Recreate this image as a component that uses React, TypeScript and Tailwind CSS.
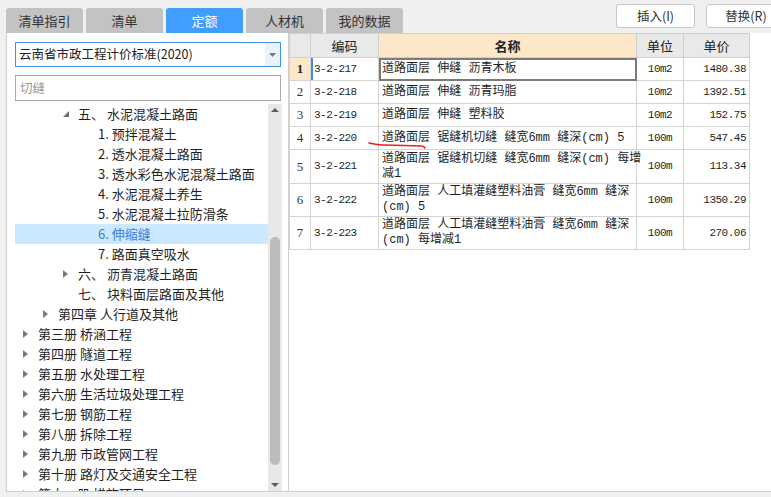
import React from "react";
import clsx from "clsx";

const tabs = ["清单指引", "清单", "定额", "人材机", "我的数据"];

type Node = { level: number; text: string; arrow?: "open" | "closed"; selected?: boolean };

const tree: Node[] = [
  { level: 2, text: "五、 水泥混凝土路面", arrow: "open" },
  { level: 3, text: "1. 预拌混凝土" },
  { level: 3, text: "2. 透水混凝土路面" },
  { level: 3, text: "3. 透水彩色水泥混凝土路面" },
  { level: 3, text: "4. 水泥混凝土养生" },
  { level: 3, text: "5. 水泥混凝土拉防滑条" },
  { level: 3, text: "6. 伸缩缝", selected: true },
  { level: 3, text: "7. 路面真空吸水" },
  { level: 2, text: "六、 沥青混凝土路面", arrow: "closed" },
  { level: 2, text: "七、 块料面层路面及其他" },
  { level: 1, text: "第四章 人行道及其他", arrow: "closed" },
  { level: 0, text: "第三册 桥涵工程", arrow: "closed" },
  { level: 0, text: "第四册 隧道工程", arrow: "closed" },
  { level: 0, text: "第五册 水处理工程", arrow: "closed" },
  { level: 0, text: "第六册 生活垃圾处理工程", arrow: "closed" },
  { level: 0, text: "第七册 钢筋工程", arrow: "closed" },
  { level: 0, text: "第八册 拆除工程", arrow: "closed" },
  { level: 0, text: "第九册 市政管网工程", arrow: "closed" },
  { level: 0, text: "第十册 路灯及交通安全工程", arrow: "closed" },
  { level: 0, text: "第十一册 措施项目", arrow: "closed" },
];

const rows = [
  { code: "3-2-217", name: ["道路面层 伸缝 沥青木板"], unit: "10m2", price: "1480.38", h: "h-[23px]" },
  { code: "3-2-218", name: ["道路面层 伸缝 沥青玛脂"], unit: "10m2", price: "1392.51", h: "h-[23px]" },
  { code: "3-2-219", name: ["道路面层 伸缝 塑料胶"], unit: "10m2", price: "152.75", h: "h-[23px]" },
  { code: "3-2-220", name: ["道路面层 锯缝机切缝 缝宽6mm 缝深(cm) 5"], unit: "100m", price: "547.45", h: "h-[23px]" },
  { code: "3-2-221", name: ["道路面层 锯缝机切缝 缝宽6mm 缝深(cm) 每增", "减1"], unit: "100m", price: "113.34", h: "h-[34px]" },
  { code: "3-2-222", name: ["道路面层 人工填灌缝塑料油膏 缝宽6mm 缝深", "(cm) 5"], unit: "100m", price: "1350.29", h: "h-[33px]" },
  { code: "3-2-223", name: ["道路面层 人工填灌缝塑料油膏 缝宽6mm 缝深", "(cm) 每增减1"], unit: "100m", price: "270.06", h: "h-[33px]" },
];

function Arrow({ kind }: { kind?: "open" | "closed" }) {
  if (!kind) return null;
  if (kind === "open")
    return (
      <svg width="6" height="6" viewBox="0 0 6 6">
        <path d="M6 0 L6 6 L0 6 Z" fill="#6f6f6f" />
      </svg>
    );
  return (
    <svg width="5" height="8" viewBox="0 0 5 8">
      <path d="M0 0 L5 4 L0 8 Z" fill="#7a7a7a" />
    </svg>
  );
}

export default function App() {
  return (
    <div className="relative w-[771px] h-[497px] overflow-hidden bg-[#f0f0f0] font-['Noto_Sans_CJK_SC',sans-serif] text-[#1f1f1f]">
      {/* top bar */}
      <div className="flex h-[33px]">
        <div className="flex items-end gap-[3px] pl-[6px] shrink-0">
          {tabs.map((t) => (
            <div
              key={t}
              className={clsx(
                "w-[77px] h-[25px] rounded-t-[3px] flex items-center justify-center text-[13px]",
                t === "定额" ? "bg-[#409eff] text-white" : "bg-[#c3c3c3] text-[#333]"
              )}
            >
              {t}
            </div>
          ))}
        </div>
        <div className="flex gap-[11px] ml-[213px] pt-[4px] shrink-0">
          <div className="w-[79px] h-[24px] bg-white border border-[#c9c9c9] rounded-[3px] flex items-center justify-center text-[12.5px] text-[#333]">
            插入(I)
          </div>
          <div className="w-[80px] h-[24px] bg-white border border-[#c9c9c9] rounded-[3px] flex items-center justify-center text-[12.5px] text-[#333]">
            替换(R)
          </div>
        </div>
      </div>

      {/* body */}
      <div className="flex h-[459px]">
        {/* left panel */}
        <div className="shrink-0 ml-[6px] w-[283px] bg-white border-l border-r border-b border-[#cfcfcf] pt-[9px] pl-[8px] flex flex-col">
          <div className="w-[266px] h-[25px] border border-[#3f8fe8] flex">
            <div className="flex-1 flex items-center pl-[3px] text-[12.5px] text-[#222]">云南省市政工程计价标准(2020)</div>
            <div className="w-[15px] bg-[#eaf2fd] flex items-center justify-center">
              <svg width="7" height="4" viewBox="0 0 7 4">
                <path d="M0 0 L7 0 L3.5 4 Z" fill="#7a7a7a" />
              </svg>
            </div>
          </div>
          <div className="mt-[8px] w-[266px] h-[26px] border border-[#a8a8a8] flex items-center pl-[4px] text-[12.5px] text-[#9a9a9a]">
            切缝
          </div>
          <div className="mt-[3px] flex h-[387px]">
            <div className="w-[253px] overflow-hidden">
              {tree.map((n, i) => (
                <div
                  key={i}
                  className={clsx(
                    "h-[20px] flex items-center text-[13px] whitespace-nowrap",
                    n.selected ? "bg-[#cce8ff] text-[#3b7fd9]" : "text-[#1f1f1f]"
                  )}
                >
                  <div
                    className={clsx(
                      "w-[15px] flex items-center shrink-0",
                      n.level === 0 && "ml-[8px]",
                      n.level === 1 && "ml-[28px]",
                      n.level === 2 && "ml-[48px]",
                      n.level === 3 && "ml-[68px]"
                    )}
                  >
                    <Arrow kind={n.arrow} />
                  </div>
                  <span>{n.text}</span>
                </div>
              ))}
            </div>
            <div className="w-[14px] bg-[#e8e8e8] flex flex-col items-center">
              <div className="h-[12px] flex items-center">
                <svg width="8" height="4" viewBox="0 0 8 4">
                  <path d="M0 4 L8 4 L4 0 Z" fill="#5f5f5f" />
                </svg>
              </div>
              <div className="h-[121px]" />
              <div className="w-[10px] h-[228px] rounded-[5px] bg-[#bcbcbc]" />
              <div className="flex-1" />
              <div className="h-[12px] flex items-center">
                <svg width="8" height="4" viewBox="0 0 8 4">
                  <path d="M0 0 L8 0 L4 4 Z" fill="#5f5f5f" />
                </svg>
              </div>
            </div>
          </div>
        </div>

        {/* right panel */}
        <div className="flex-1 bg-white border-b border-[#cfcfcf]">
          <table className="table-fixed border-collapse w-[460px] text-[12px]">
            <colgroup>
              <col className="w-[21px]" />
              <col className="w-[68px]" />
              <col className="w-[258px]" />
              <col className="w-[47px]" />
              <col className="w-[66px]" />
            </colgroup>
            <thead>
              <tr className="h-[24px] text-[13px] text-[#222]">
                <th className="border border-[#cfcfcf] bg-[#e9e9e9] font-normal" />
                <th className="border border-[#cfcfcf] bg-[#e9e9e9] font-normal">编码</th>
                <th className="border border-[#cfcfcf] bg-[#fde7c9] font-bold">名称</th>
                <th className="border border-[#cfcfcf] bg-[#e9e9e9] font-normal">单位</th>
                <th className="border border-[#cfcfcf] bg-[#e9e9e9] font-normal">单价</th>
              </tr>
            </thead>
            <tbody>
              {rows.map((r, i) => (
                <tr key={r.code} className={r.h}>
                  <td
                    className={clsx(
                      "border border-[#d4d4d4] text-center font-['Liberation_Serif',serif] text-[13px]",
                      i === 0 ? "bg-[#fde7c9] font-bold" : "text-[#333]"
                    )}
                  >
                    {i + 1}
                  </td>
                  <td
                    className={clsx(
                      "border border-[#d4d4d4] pl-[3px] font-['Liberation_Mono',monospace] text-[11px] tracking-[-0.5px]",
                      i === 0 && "shadow-[inset_2px_0_0_#3b8de5]"
                    )}
                  >
                    {r.code}
                  </td>
                  <td
                    className={clsx(
                      "border border-[#d4d4d4] pl-[3px] leading-[15px] align-middle whitespace-nowrap font-['Liberation_Mono','Noto_Sans_CJK_SC',monospace]",
                      i === 0 && "outline-2 outline-solid outline-[#7b7b7b] -outline-offset-2"
                    )}
                  >
                    {r.name.map((l, j) => (
                      <div key={j}>{l}</div>
                    ))}
                  </td>
                  <td className="border border-[#d4d4d4] text-center font-['Liberation_Mono',monospace] text-[11px] tracking-[-0.5px]">
                    {r.unit}
                  </td>
                  <td className="border border-[#d4d4d4] text-right pr-[3px] font-['Liberation_Mono',monospace] text-[11px] tracking-[-0.5px]">
                    {r.price}
                  </td>
                </tr>
              ))}
            </tbody>
          </table>
        </div>
      </div>

      {/* hand-drawn red annotation */}
      <svg className="absolute left-[367px] top-[138px]" width="62" height="14" viewBox="0 0 62 14">
        <path d="M2 5 C 8 6, 13 7, 18 7 L 55 8 C 57 8, 57 9, 58 10" stroke="#ee1c1c" strokeWidth="1.6" fill="none" strokeLinecap="round" />
      </svg>
    </div>
  );
}
